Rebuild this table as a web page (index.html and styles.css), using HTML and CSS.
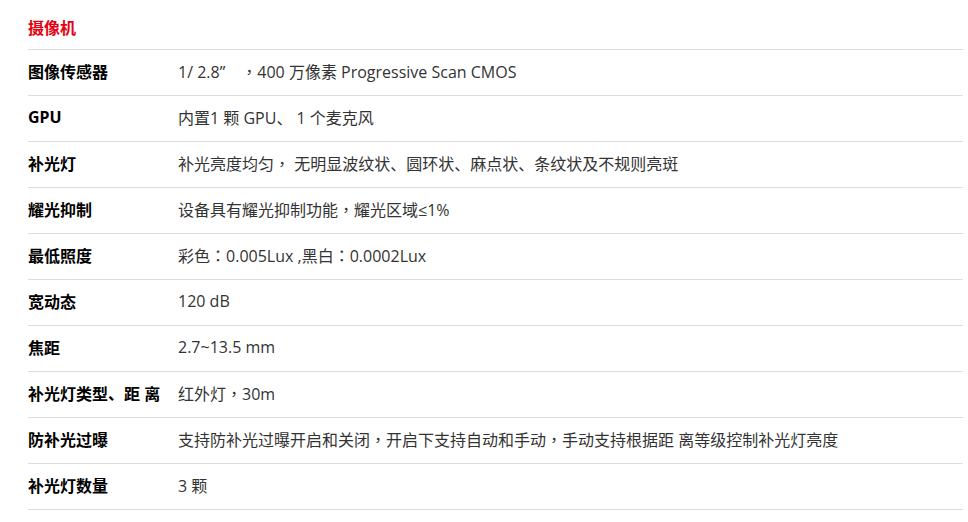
FILE: index.html
```html
<!DOCTYPE html>
<html lang="zh-CN">
<head>
<meta charset="utf-8">
<title>摄像机参数</title>
<link rel="stylesheet" href="styles.css">
</head>
<body>
<div class="spec">
  <div class="row head"><div class="title">摄像机</div></div>
  <div class="row"><div class="label">图像传感器</div><div class="value">1/ 2.8”　<span class="p" lang="zh-TW">，</span>400 万像素 Progressive Scan CMOS</div></div>
  <div class="row"><div class="label">GPU</div><div class="value">内置1 颗 GPU、 1 个麦克风</div></div>
  <div class="row"><div class="label">补光灯</div><div class="value">补光亮度均匀<span class="p" lang="zh-TW">，</span> 无明显波纹状、圆环状、麻点状、条纹状及不规则亮斑</div></div>
  <div class="row"><div class="label">耀光抑制</div><div class="value">设备具有耀光抑制功能<span class="p" lang="zh-TW">，</span>耀光区域≤1%</div></div>
  <div class="row"><div class="label">最低照度</div><div class="value">彩色<span class="p" lang="zh-TW">：</span>0.005Lux ,黑白<span class="p" lang="zh-TW">：</span>0.0002Lux</div></div>
  <div class="row"><div class="label">宽动态</div><div class="value">120 dB</div></div>
  <div class="row"><div class="label">焦距</div><div class="value">2.7~13.5 mm</div></div>
  <div class="row"><div class="label">补光灯类型、距 离</div><div class="value">红外灯<span class="p" lang="zh-TW">，</span>30m</div></div>
  <div class="row"><div class="label">防补光过曝</div><div class="value">支持防补光过曝开启和关闭<span class="p" lang="zh-TW">，</span>开启下支持自动和手动<span class="p" lang="zh-TW">，</span>手动支持根据距 离等级控制补光灯亮度</div></div>
  <div class="row"><div class="label">补光灯数量</div><div class="value">3 颗</div></div>
</div>
</body>
</html>
```

FILE: styles.css
```css
html, body {
  margin: 0;
  padding: 0;
  background: #fff;
}
body {
  font-family: "Open Sans", "Noto Sans CJK SC", sans-serif;
}
.spec {
  width: 935px;
  margin-left: 28px;
  padding-top: 4px;
}
.row {
  display: flex;
  align-items: center;
  height: 45px;
  border-bottom: 1px solid #dcdcdc;
}
.title {
  color: #e4000f;
  font-weight: bold;
  font-size: 16px;
  font-family: "Noto Sans CJK SC", sans-serif;
}
.label {
  width: 150px;
  flex: none;
  font-size: 16px;
  font-weight: bold;
  color: #000;
  font-family: "Noto Sans", "Noto Sans CJK SC", sans-serif;
  margin-top: -3px;
}
.value {
  font-size: 16px;
  color: #333;
  margin-top: -3px;
}
.p {
  font-family: "Noto Sans CJK TC", sans-serif;
}
```
